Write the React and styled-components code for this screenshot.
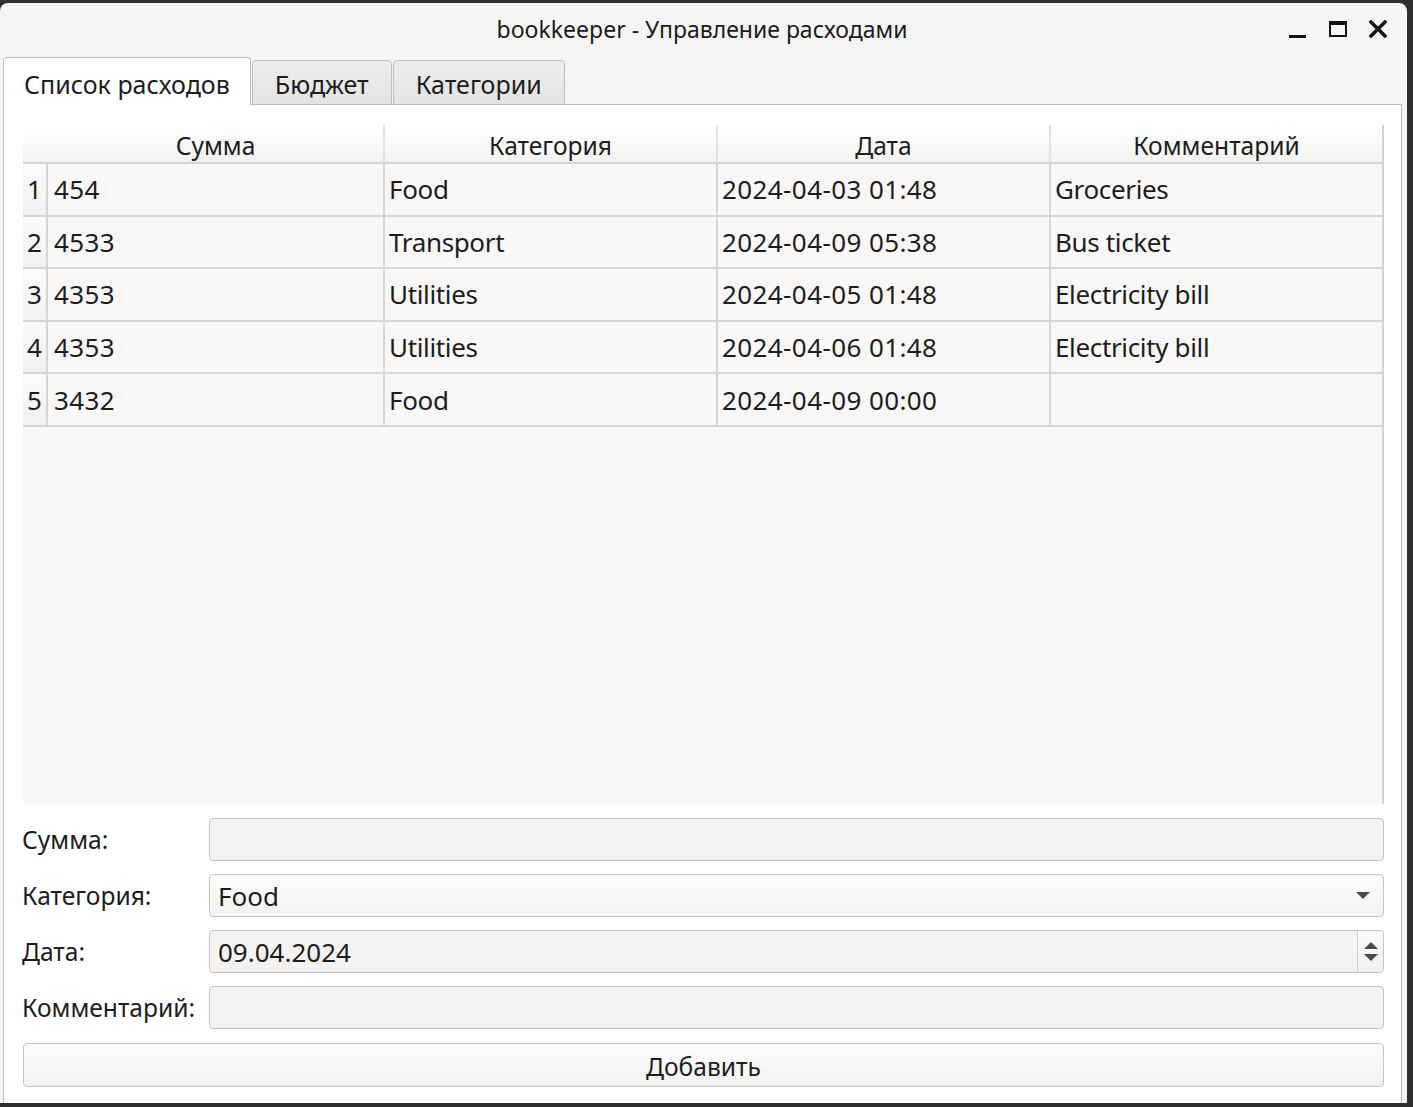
import React from "react";
import styled, { createGlobalStyle } from "styled-components";

const GlobalStyle = createGlobalStyle`
  html, body {
    margin: 0;
    padding: 0;
    background: #2e2e2e;
  }
  body {
    font-family: "Noto Sans", "Open Sans", sans-serif;
    color: #1d1d1d;
  }
`;

const expenses = [
  { sum: "454", category: "Food", date: "2024-04-03 01:48", comment: "Groceries" },
  { sum: "4533", category: "Transport", date: "2024-04-09 05:38", comment: "Bus ticket" },
  { sum: "4353", category: "Utilities", date: "2024-04-05 01:48", comment: "Electricity bill" },
  { sum: "4353", category: "Utilities", date: "2024-04-06 01:48", comment: "Electricity bill" },
  { sum: "3432", category: "Food", date: "2024-04-09 00:00", comment: "" },
];

const columns = ["Сумма", "Категория", "Дата", "Комментарий"];

const Window = styled.div`
  margin-top: 3px;
  width: 1407px;
  height: 1100px;
  background: #f6f5f4;
  border-radius: 8px 8px 0 0;
  display: flex;
  flex-direction: column;
  box-sizing: border-box;
`;

const TitleBar = styled.div`
  height: 54px;
  display: grid;
  grid-template-columns: 1fr auto 1fr;
  align-items: center;
`;

const Title = styled.div`
  font-size: 23px;
  color: #1a1a1a;
  padding-bottom: 3px;
  margin-left: -3px;
`;

const Controls = styled.div`
  justify-self: end;
  display: flex;
  align-items: center;
  gap: 22px;
  padding-right: 20px;
  padding-bottom: 2px;
  svg {
    display: block;
  }
`;

const Body = styled.div`
  flex: 1;
  display: flex;
  flex-direction: column;
  padding: 0 5px 0 3px;
`;

const TabBar = styled.div`
  display: flex;
  align-items: flex-end;
  height: 48px;
  gap: 1px;
  margin-bottom: -1px;
  position: relative;
  z-index: 1;
`;

const Tab = styled.div`
  box-sizing: border-box;
  height: ${(p) => (p.$active ? "48px" : "45px")};
  padding: ${(p) => (p.$active ? "4px 20px 0" : "3px 22px 0")};
  display: flex;
  align-items: center;
  font-size: 25px;
  border: 1px solid #bfbebd;
  border-bottom: ${(p) => (p.$active ? "none" : "1px solid #bfbebd")};
  border-radius: 4px 4px 0 0;
  background: ${(p) =>
    p.$active ? "#ffffff" : "linear-gradient(#ededec, #e4e3e2)"};
  color: #1d1d1d;
`;

const Pane = styled.div`
  flex: 1;
  background: #ffffff;
  border: 1px solid #bfbebd;
  border-bottom: none;
  padding: 20px 17px 16px 19px;
  display: flex;
  flex-direction: column;
`;

const Table = styled.div`
  height: 679px;
  background: #f9f8f7;
  border-right: 2px solid #d3d2d1;
  display: grid;
  grid-template-columns: 25px 335px 333px 333px 333px;
  grid-auto-rows: 52.6px;
  grid-template-rows: 39px;
  align-content: start;
  font-size: 26px;
`;

const HeaderCell = styled.div`
  display: flex;
  align-items: center;
  justify-content: center;
  background: linear-gradient(#ffffff, #f3f3f2);
  border-bottom: 2px solid #d6d5d4;
  border-left: ${(p) => (p.$divider ? "2px solid #e4e3e2" : "none")};
  box-sizing: border-box;
  padding-top: 4px;
  font-size: 24.6px;
`;

const RowHeader = styled.div`
  display: flex;
  align-items: center;
  background: linear-gradient(#fbfbfa, #f2f1f0);
  border-right: 2px solid #d6d5d4;
  border-bottom: 2px solid #d6d5d4;
  box-sizing: border-box;
  padding-left: 4px;
`;

const Cell = styled.div`
  display: flex;
  align-items: center;
  padding-left: ${(p) => (p.$first ? "6px" : "4px")};
  border-left: ${(p) => (p.$first ? "none" : "2px solid #d8d7d6")};
  border-bottom: 2px solid #d8d7d6;
  box-sizing: border-box;
  white-space: nowrap;
  letter-spacing: ${(p) => (p.$digits ? "0.4px" : "-0.35px")};
`;

const Form = styled.div`
  margin-top: 14px;
  display: grid;
  grid-template-columns: 186px 1fr;
  row-gap: 13px;
  align-items: center;
  font-size: 24.6px;
`;

const Label = styled.div`
  margin-left: -1px;
`;

const Field = styled.div`
  box-sizing: border-box;
  height: 43px;
  border: 1px solid #c5c4c3;
  border-radius: 4px;
  background: ${(p) =>
    p.$combo ? "linear-gradient(#fdfdfd, #f4f3f2)" : "#f4f3f2"};
  display: flex;
  align-items: center;
  padding-left: 8px;
  font-size: 26px;
  overflow: hidden;
`;

const FieldText = styled.span`
  flex: 1;
`;

const ComboArrow = styled.div`
  width: 0;
  height: 0;
  border-left: 7px solid transparent;
  border-right: 7px solid transparent;
  border-top: 7px solid #4a4a4a;
  margin-right: 13px;
`;

const Spin = styled.div`
  align-self: stretch;
  width: 25px;
  border-left: 1px solid #cfcecd;
  background: linear-gradient(#fbfbfb, #f1f0ef);
  display: flex;
  flex-direction: column;
  align-items: center;
  justify-content: center;
  gap: 5px;
`;

const SpinArrow = styled.div`
  width: 0;
  height: 0;
  border-left: 7px solid transparent;
  border-right: 7px solid transparent;
  ${(p) =>
    p.$up
      ? "border-bottom: 7px solid #4a4a4a;"
      : "border-top: 7px solid #4a4a4a;"}
`;

const AddButton = styled.button`
  grid-column: 1 / -1;
  height: 44px;
  margin-top: 1px;
  border: 1px solid #c5c4c3;
  border-radius: 4px;
  background: linear-gradient(#fdfdfd, #f3f2f1);
  font-family: inherit;
  font-size: 24.6px;
  color: #1d1d1d;
  padding: 2px 0 0;
`;

const MinimizeIcon = () => (
  <svg width="18" height="18" viewBox="0 0 18 18">
    <rect x="0" y="15" width="17" height="3" fill="#111" />
  </svg>
);

const MaximizeIcon = () => (
  <svg width="18" height="18" viewBox="0 0 18 18">
    <rect x="1" y="2" width="16" height="14" fill="none" stroke="#111" strokeWidth="2" />
    <rect x="1" y="2" width="16" height="3" fill="#111" />
  </svg>
);

const CloseIcon = () => (
  <svg width="18" height="18" viewBox="0 0 18 18">
    <path d="M2 2 L16 16 M16 2 L2 16" stroke="#111" strokeWidth="3.4" strokeLinecap="square" />
  </svg>
);

const ExpenseTable = ({ data }) => (
  <Table>
    <HeaderCell />
    {columns.map((c, i) => (
      <HeaderCell key={c} $divider={i > 0}>{c}</HeaderCell>
    ))}
    {data.map((row, i) => (
      <React.Fragment key={i}>
        <RowHeader>{i + 1}</RowHeader>
        <Cell $first $digits>{row.sum}</Cell>
        <Cell>{row.category}</Cell>
        <Cell $digits>{row.date}</Cell>
        <Cell>{row.comment}</Cell>
      </React.Fragment>
    ))}
  </Table>
);

const App = () => {
  return (
    <>
      <GlobalStyle />
      <Window>
        <TitleBar>
          <div />
          <Title>bookkeeper - Управление расходами</Title>
          <Controls>
            <MinimizeIcon />
            <MaximizeIcon />
            <CloseIcon />
          </Controls>
        </TitleBar>
        <Body>
          <TabBar>
            <Tab $active>Список расходов</Tab>
            <Tab>Бюджет</Tab>
            <Tab>Категории</Tab>
          </TabBar>
          <Pane>
            <ExpenseTable data={expenses} />
            <Form>
              <Label>Сумма:</Label>
              <Field />
              <Label>Категория:</Label>
              <Field $combo>
                <FieldText>Food</FieldText>
                <ComboArrow />
              </Field>
              <Label>Дата:</Label>
              <Field>
                <FieldText>09.04.2024</FieldText>
                <Spin>
                  <SpinArrow $up />
                  <SpinArrow />
                </Spin>
              </Field>
              <Label>Комментарий:</Label>
              <Field />
              <AddButton>Добавить</AddButton>
            </Form>
          </Pane>
        </Body>
      </Window>
    </>
  );
};

export default App;
